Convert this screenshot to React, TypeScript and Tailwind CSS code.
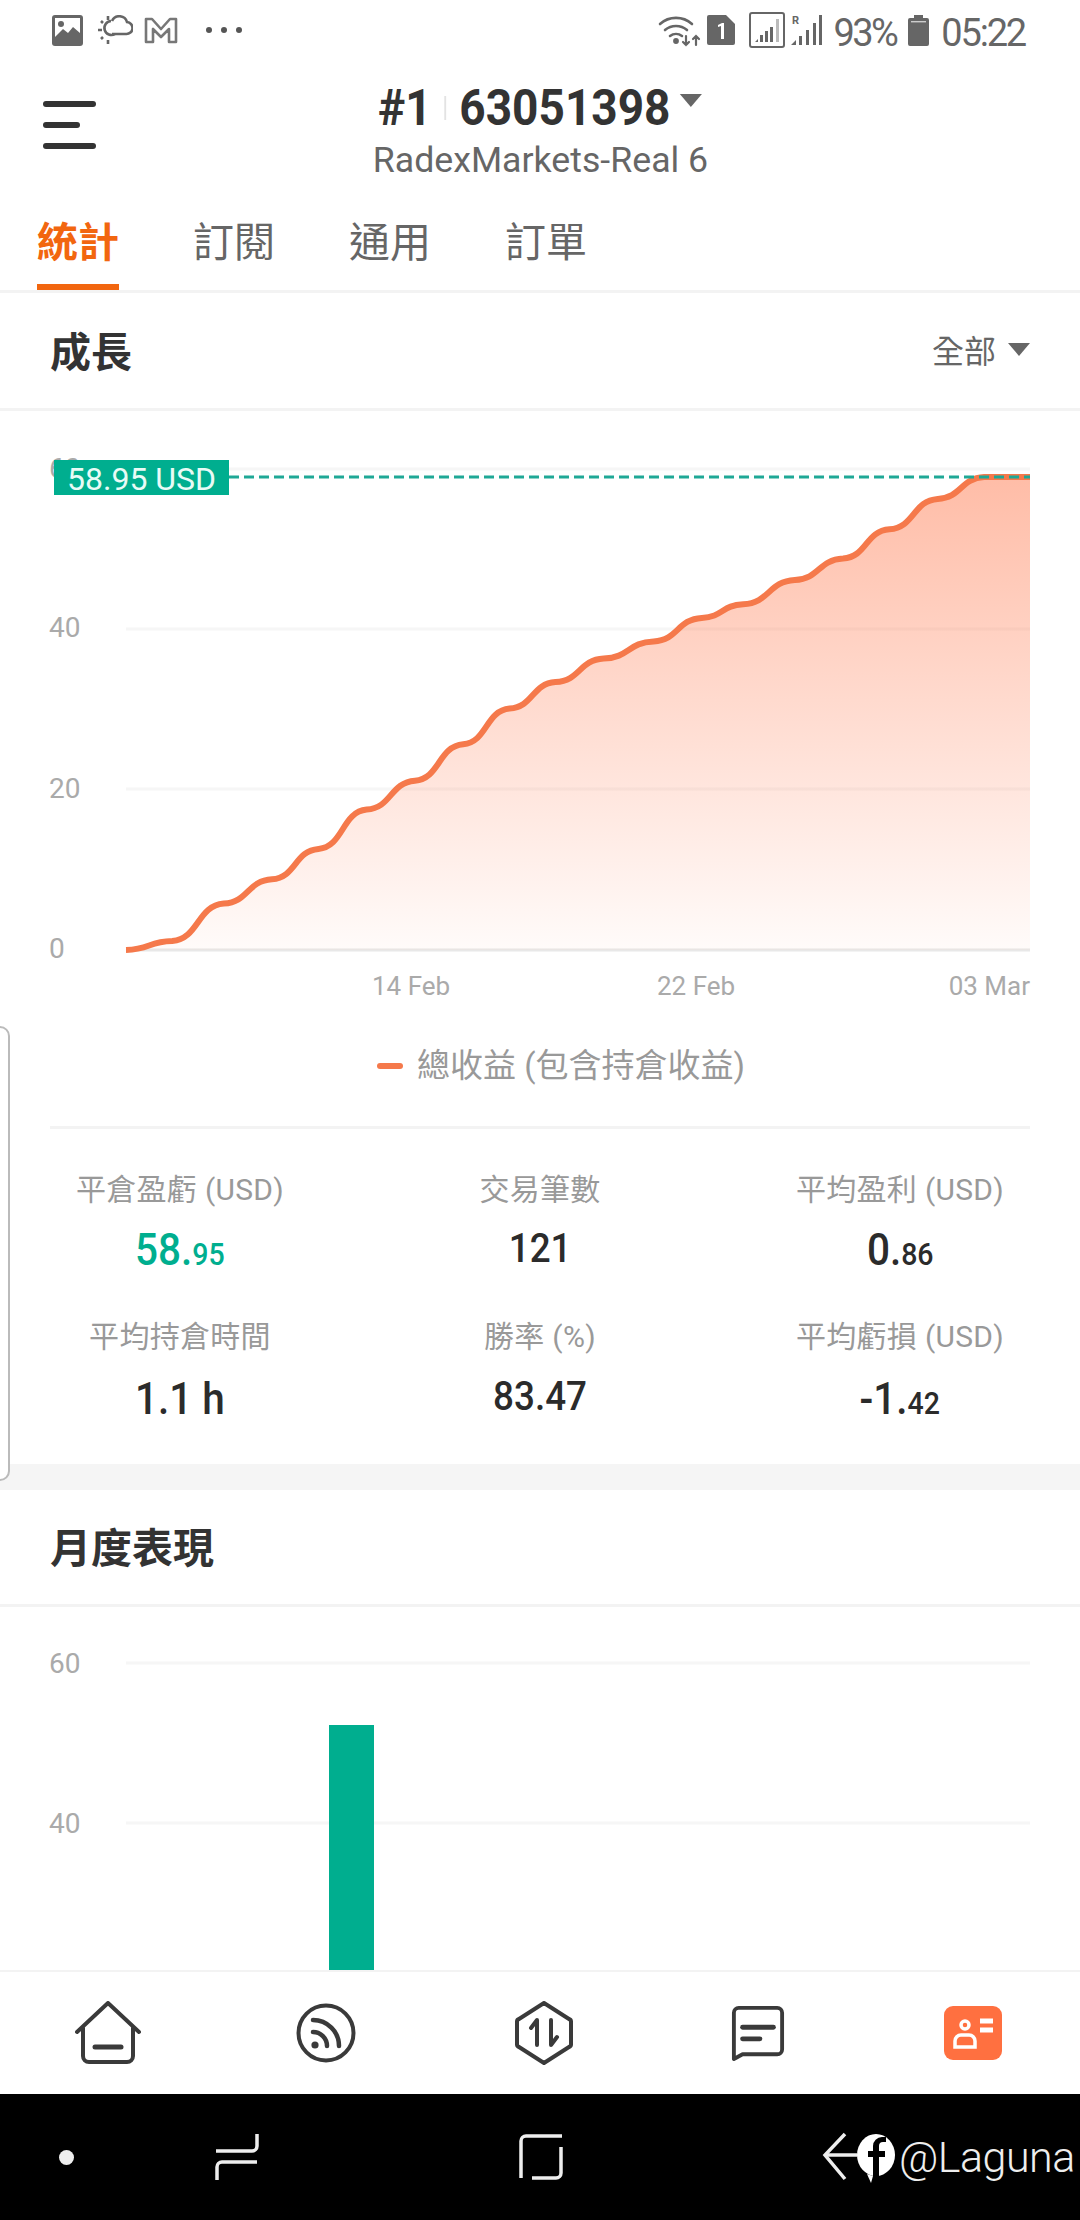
import React from "react";

const MIX = "font-['Roboto','Noto_Sans_CJK_TC',sans-serif]";

const rawA: [number, number][] = [
  [366,1456],[500,1431],[650,1326],[790,1258],[925,1173],[1065,1063],[1205,982],[1345,880],[1480,780],
];
const rawB: [number, number][] = [
  [45,706],[185,640],[330,592],[470,526],[590,488],[740,420],[880,360],[1015,278],[1155,193],[1290,132],
];
const pts: [number, number][] = [
  ...rawA.map(([x, y]): [number, number] => [x / 2.904, 430 + y / 2.8]),
  ...rawB.map(([x, y]): [number, number] => [540 + x / 2.904, 430 + y / 2.8]),
];

function stepCurve(p: [number, number][]) {
  let d = `M${p[0][0].toFixed(1)} ${p[0][1].toFixed(1)}`;
  for (let i = 0; i < p.length - 1; i++) {
    const [x0, y0] = p[i];
    const [x1, y1] = p[i + 1];
    const k = (x1 - x0) * 0.52;
    const s = (y1 - y0) * 0.06;
    d += ` C${(x0 + k).toFixed(1)} ${(y0 + s).toFixed(1)} ${(x1 - k).toFixed(1)} ${(y1 - s).toFixed(1)} ${x1.toFixed(1)} ${y1.toFixed(1)}`;
  }
  return d + " L1030 477";
}
const linePath = stepCurve(pts);
const areaPath = `${linePath} L1030 950 L126 950 Z`;

function StatusBar() {
  return (
    <div className="flex h-[60px] shrink-0 items-center bg-white pl-[52px] pr-[55px] text-[#666]">
      <svg width="31" height="31" viewBox="0 0 31 31" className="mr-[14px]">
        <rect x="0" y="0" width="31" height="31" rx="3" fill="#666" />
        <rect x="3" y="3" width="25" height="19" fill="#fff" />
        <circle cx="9" cy="9" r="3" fill="#666" />
        <path d="M3 22 L11 14 L16 18 L21 12 L28 18 V25 H3 Z" fill="#666" />
      </svg>
      <svg width="36" height="30" viewBox="0 0 36 30" className="mr-[11px]" fill="none" stroke="#666" strokeWidth="2.6">
        <path d="M15 19 H29 a6 6 0 0 0 1-12 a8 8 0 0 0-15-1" />
        <path d="M18 19 a7 7 0 1 1-4-13" />
        <path d="M1 15h4M11 1v4M11 25v4M4 6l2 2M4 24l2-2" />
      </svg>
      <svg width="34" height="28" viewBox="0 0 34 28" className="mr-[28px]" fill="none" stroke="#777" strokeWidth="2.6" strokeLinejoin="round">
        <path d="M2 3 H8 L17 13 L26 3 H32 V26 H25 V13 L17 21 L9 13 V26 H2 Z" />
      </svg>
      <div className="flex gap-[9px]">
        <span className="size-[6px] rounded-full bg-[#555]" />
        <span className="size-[6px] rounded-full bg-[#555]" />
        <span className="size-[6px] rounded-full bg-[#555]" />
      </div>
      <div className="ml-auto flex items-center">
        <svg width="44" height="34" viewBox="0 0 44 34" className="mr-[5px]" fill="none" stroke="#666" strokeWidth="2.6" strokeLinecap="round">
          <path d="M2 11 a24 24 0 0 1 32 0" />
          <path d="M7 17 a17 17 0 0 1 22 0" />
          <path d="M12 23 a10 10 0 0 1 12 0" />
          <circle cx="18" cy="28" r="1.6" fill="#666" />
          <path d="M28 23v9M25 29l3 3 3-3M38 32v-9M35 26l3-3 3 3" strokeWidth="2.2" />
        </svg>
        <svg width="28" height="30" viewBox="0 0 28 30" className="mr-[14px]">
          <path d="M2 0 H19 L28 9 V28 a2 2 0 0 1-2 2 H2 a2 2 0 0 1-2-2 V2 a2 2 0 0 1 2-2 Z" fill="#666" />
          <path d="M11 10 L15 8 H17 V24 H14 V11 L11 12 Z" fill="#fff" />
        </svg>
        <svg width="36" height="36" viewBox="0 0 36 36" className="mr-[6px]">
          <rect x="1" y="1" width="34" height="34" rx="2" fill="none" stroke="#666" strokeWidth="2" />
          <path d="M6 30 l3-3 v3z M11 30 v-7 h3 v7z M16 30 v-11 h3 v11z M21 30 v-15 h3 v15z" fill="#666" />
          <path d="M27 30 V7 h3 v23z" fill="#bbb" />
        </svg>
        <svg width="32" height="32" viewBox="0 0 32 32" className="mr-[11px]">
          <text x="1" y="10" fontSize="11" fontWeight="700" fill="#666" fontFamily="Roboto">R</text>
          <path d="M0 31 l5-5 v5z M8 31 v-9 h3 v9z M15 31 v-15 h3 v15z M22 31 v-22 h3 v22z M28 31 V1 h3 v30z" fill="#666" />
        </svg>
        <span className="mr-[12px] mt-[5px] font-['Roboto',sans-serif] text-[38px] leading-none tracking-[-2.6px]">93%</span>
        <svg width="21" height="31" viewBox="0 0 21 31" className="mr-[12px]">
          <path d="M6 0 h9 v3 h4 a2 2 0 0 1 2 2 v24 a2 2 0 0 1-2 2 H2 a2 2 0 0 1-2-2 V5 a2 2 0 0 1 2-2 h4 Z" fill="#666" />
          <rect x="3" y="6" width="15" height="1.4" fill="#ccc" />
        </svg>
        <span className="mt-[5px] font-['Roboto',sans-serif] text-[38px] leading-none tracking-[-2.2px]">05:22</span>
      </div>
    </div>
  );
}

function Header() {
  return (
    <div className="grid h-[130px] shrink-0 grid-cols-[1fr_auto_1fr] items-center bg-white">
      <div className="flex flex-col gap-[15px] pl-[43px]">
        <span className="h-[6px] w-[53px] rounded-full bg-[#333]" />
        <span className="h-[6px] w-[37px] rounded-full bg-[#333]" />
        <span className="h-[6px] w-[53px] rounded-full bg-[#333]" />
      </div>
      <div className="flex flex-col items-center pt-[9px]">
        <div className="flex h-[58px] scale-x-[0.92] items-center font-['Roboto',sans-serif] text-[50px] font-bold leading-none text-[#333]">
          <span>#1</span>
          <span className="mx-[14px] h-[24px] w-[2px] bg-[#e3e3e3]" />
          <span>63051398</span>
          <span className="mb-[14px] ml-[10px] h-0 w-0 border-x-[12px] border-t-[13px] border-x-transparent border-t-[#666]" />
        </div>
        <div className="mt-[4px] scale-x-[1.02] font-['Roboto',sans-serif] text-[35px] font-normal leading-[40px] text-[#666]">RadexMarkets-Real 6</div>
      </div>
      <div />
    </div>
  );
}

function Tabs() {
  const tabs = ["訂閱", "通用", "訂單"];
  return (
    <div className="flex h-[103px] shrink-0 items-stretch gap-[74px] border-b-[3px] border-[#f3f3f3] bg-white pl-[37px]">
      <div className="flex flex-col items-center border-b-[6px] border-[#f2660f] pt-[24px]">
        <span className="font-['Noto_Sans_CJK_TC',sans-serif] text-[41px] font-bold leading-[50px] text-[#f2660f]">統計</span>
      </div>
      {tabs.map((t) => (
        <div key={t} className="flex flex-col items-center pt-[24px]">
          <span className="font-['Noto_Sans_CJK_TC',sans-serif] text-[41px] font-normal leading-[50px] text-[#666]">{t}</span>
        </div>
      ))}
    </div>
  );
}

function SectionTitle({ title, right, tall }: { title: string; right?: boolean; tall?: boolean }) {
  return (
    <div className={`flex shrink-0 items-center justify-between border-b-[3px] border-[#f3f3f3] px-[50px] pb-[3px] ${tall ? "h-[118px]" : "h-[117px]"}`}>
      <span className="font-['Noto_Sans_CJK_TC',sans-serif] text-[41px] font-bold leading-none text-[#333]">{title}</span>
      {right && (
        <span className="flex items-center gap-[12px] font-['Noto_Sans_CJK_TC',sans-serif] text-[32px] leading-none text-[#666]">
          全部
          <span className="h-0 w-0 border-x-[11px] border-t-[13px] border-x-transparent border-t-[#666]" />
        </span>
      )}
    </div>
  );
}

function GrowthChart() {
  return (
    <svg width="1080" height="620" viewBox="0 411 1080 620" className="block shrink-0">
      <defs>
        <linearGradient id="area" gradientUnits="userSpaceOnUse" x1="0" y1="477" x2="0" y2="950">
          <stop offset="0" stopColor="#ff7a4f" stopOpacity="0.5" />
          <stop offset="1" stopColor="#ff7a4f" stopOpacity="0.03" />
        </linearGradient>
      </defs>
      <g stroke="#f6f6f6" strokeWidth="3">
        <line x1="126" y1="469" x2="1030" y2="469" />
        <line x1="126" y1="629" x2="1030" y2="629" />
        <line x1="126" y1="789" x2="1030" y2="789" />
      </g>
      <line x1="126" y1="950" x2="1030" y2="950" stroke="#e8e8e8" strokeWidth="3" />
      <g fontFamily="Roboto" fontSize="28" fill="#aaa">
        <text x="49" y="478">60</text>
        <text x="49" y="637">40</text>
        <text x="49" y="798">20</text>
        <text x="49" y="958">0</text>
      </g>
      <path d={areaPath} fill="url(#area)" />
      <path d={linePath} fill="none" stroke="#f5794b" strokeWidth="6" strokeLinejoin="round" />
      <line x1="229" y1="477" x2="1030" y2="477" stroke="#1fa896" strokeWidth="3" strokeDasharray="10 5" />
      <rect x="54" y="460" width="175" height="35" fill="#00ae8f" />
      <text x="67" y="490" fontFamily="Roboto" fontSize="32" fill="#e8fbf6">58.95 USD</text>
      <g fontFamily="Roboto" fontSize="26" fill="#aaa">
        <text x="372" y="995">14 Feb</text>
        <text x="657" y="995">22 Feb</text>
        <text x="1030" y="995" textAnchor="end">03 Mar</text>
      </g>
    </svg>
  );
}

function Value({ a, b, green }: { a: string; b?: string; green?: boolean }) {
  return (
    <div className={`flex h-[48px] scale-x-[0.92] items-baseline justify-center font-['Roboto',sans-serif] font-medium leading-[48px] ${green ? "text-[#00ae8f]" : "text-[#2b2b2b]"}`}>
      <span className={b || a === "1.1 h" ? "text-[44px]" : "text-[40px]"}>{a}</span>
      {b && <span className="text-[31px]">{b}</span>}
    </div>
  );
}

function Stat({ label, value, shift }: { label: string; value: React.ReactNode; shift: string }) {
  return (
    <div className="flex flex-col items-center">
      <span className={`${MIX} text-[30px] leading-[40px] tracking-[0.3px] text-[#999]`}>{label}</span>
      <div className={shift}>{value}</div>
    </div>
  );
}

function Stats() {
  return (
    <div className="mx-[50px] grid grid-cols-[260px_1fr_260px] gap-y-[43px] border-t-[3px] border-[#f3f3f3] pt-[41px]">
      <Stat label="平倉盈虧 (USD)" shift="mt-[16px]" value={<Value a="58." b="95" green />} />
      <Stat label="交易筆數" shift="mt-[15px]" value={<Value a="121" />} />
      <Stat label="平均盈利 (USD)" shift="mt-[16px]" value={<Value a="0." b="86" />} />
      <Stat label="平均持倉時間" shift="mt-[18px]" value={<Value a="1.1 h" />} />
      <Stat label="勝率 (%)" shift="mt-[16px]" value={<Value a="83.47" />} />
      <Stat label="平均虧損 (USD)" shift="mt-[18px]" value={<Value a="-1." b="42" />} />
    </div>
  );
}

function MonthlyChart() {
  return (
    <svg width="1080" height="363" viewBox="0 1607 1080 363" className="block shrink-0">
      <g stroke="#f6f6f6" strokeWidth="3">
        <line x1="126" y1="1663" x2="1030" y2="1663" />
        <line x1="126" y1="1823" x2="1030" y2="1823" />
      </g>
      <g fontFamily="Roboto" fontSize="28" fill="#aaa">
        <text x="49" y="1673">60</text>
        <text x="49" y="1833">40</text>
      </g>
      <rect x="329" y="1725" width="45" height="245" fill="#00ae8f" />
    </svg>
  );
}

function Nav() {
  const s = { fill: "none", stroke: "#3a3a3a", strokeWidth: 4, strokeLinecap: "round" as const, strokeLinejoin: "round" as const };
  return (
    <div className="flex h-[124px] shrink-0 items-center justify-between border-t-[2px] border-[#f3f3f3] bg-white pl-[75px] pr-[78px]">
      <svg width="66" height="64" viewBox="0 0 66 64" {...s}>
        <path d="M2 31 L33 2 L64 31 M8 27 V55 a6 6 0 0 0 6 6 H52 a6 6 0 0 0 6-6 V27" />
        <path d="M20 46 H46" strokeWidth="5" />
      </svg>
      <svg width="60" height="60" viewBox="0 0 60 60" {...s} className="ml-[-4px]">
        <circle cx="30" cy="30" r="27.5" />
        <circle cx="19" cy="42" r="3.6" fill="#3a3a3a" stroke="none" />
        <path d="M17 29 a14 14 0 0 1 14 14" strokeWidth="4.5" />
        <path d="M17 17 a26 26 0 0 1 26 26" strokeWidth="4.5" />
      </svg>
      <svg width="58" height="64" viewBox="0 0 58 64" {...s}>
        <path d="M29 2 L54 18 a3 3 0 0 1 2 3 V43 a3 3 0 0 1-2 3 L29 62 L4 46 a3 3 0 0 1-2-3 V21 a3 3 0 0 1 2-3 Z" />
        <path d="M22 44 V19 L16 27" />
        <path d="M36 19 V44 L42 36" />
      </svg>
      <svg width="54" height="58" viewBox="0 0 56 58" {...s}>
        <path d="M3 8 a5 5 0 0 1 5-5 H48 a5 5 0 0 1 5 5 V46 a5 5 0 0 1-5 5 H12 L3 56 Z" />
        <path d="M12 23 H44" strokeWidth="5" />
        <path d="M12 35 H30" strokeWidth="5" />
      </svg>
      <svg width="58" height="54" viewBox="0 0 58 54">
        <rect x="0" y="0" width="58" height="54" rx="9" fill="#ff7040" />
        <circle cx="21" cy="19" r="4" fill="none" stroke="#fff" strokeWidth="3.5" />
        <path d="M11 41 V35 a6 6 0 0 1 6-6 h8 a6 6 0 0 1 6 6 v6 Z" fill="none" stroke="#fff" strokeWidth="3.5" />
        <path d="M36 15 H49 M36 24 H49" stroke="#fff" strokeWidth="5" />
      </svg>
    </div>
  );
}

function SystemBar() {
  return (
    <div className="flex h-[126px] shrink-0 items-center bg-black pl-[59px] text-[#eee]">
      <span className="size-[15px] rounded-full bg-[#eee]" />
      <svg width="46" height="50" viewBox="0 0 46 50" className="ml-[140px]" fill="none" stroke="#eee" strokeWidth="3.5">
        <path d="M43 2 V14 a5 5 0 0 1-5 5 H2" />
        <path d="M43 30 H8 a5 5 0 0 0-5 5 V48" />
      </svg>
      <svg width="46" height="48" viewBox="0 0 46 48" className="ml-[258px]" fill="none" stroke="#eee" strokeWidth="3.5">
        <path d="M44 3 H8 a5 5 0 0 0-5 5 V45" />
        <path d="M43 14 V40 a5 5 0 0 1-5 5 H14" />
      </svg>
      <svg width="76" height="54" viewBox="0 0 76 54" className="ml-[257px]">
        <g fill="none" stroke="#eee" strokeWidth="3.5">
          <path d="M24 4 L4 25 L24 49" />
          <path d="M4 25 H36" />
        </g>
        <ellipse cx="55" cy="25" rx="19" ry="21" fill="#fff" />
        <path d="M46 44 L52 46 L50 53 Z" fill="#fff" />
        <path d="M58 46 V27 H64 V21 H58 V16 a4 4 0 0 1 4-4 H65 V7 H61 a9 9 0 0 0-9 9 V21 H47 V27 H52 V46 Z" fill="#000" />
      </svg>
      <span className="ml-[2px] font-['Roboto',sans-serif] text-[43px] font-light leading-none tracking-[-0.5px]">@Laguna</span>
    </div>
  );
}

export default function App() {
  return (
    <div className={`relative flex h-[2220px] w-[1080px] flex-col overflow-hidden bg-white ${MIX}`}>
      <StatusBar />
      <Header />
      <Tabs />
      <div className="flex h-[1171px] shrink-0 flex-col overflow-hidden">
        <SectionTitle title="成長" right tall />
        <GrowthChart />
        <div className="flex h-[95px] shrink-0 items-start justify-center pl-[42px] pt-[12px]">
          <span className="flex items-center gap-[14px]">
            <span className="h-[6px] w-[26px] rounded-full bg-[#f5794b]" />
            <span className={`${MIX} text-[33px] leading-[46px] text-[#999]`}>總收益 (包含持倉收益)</span>
          </span>
        </div>
        <Stats />
      </div>
      <div className="h-[26px] shrink-0 bg-[#f5f5f5]" />
      <div className="flex min-h-0 flex-1 flex-col overflow-hidden">
        <SectionTitle title="月度表現" />
        <MonthlyChart />
      </div>
      <Nav />
      <SystemBar />
      <div className="absolute left-[-12px] top-[1026px] h-[455px] w-[22px] rounded-[10px] border-[2px] border-[#bbb] bg-white" />
    </div>
  );
}
